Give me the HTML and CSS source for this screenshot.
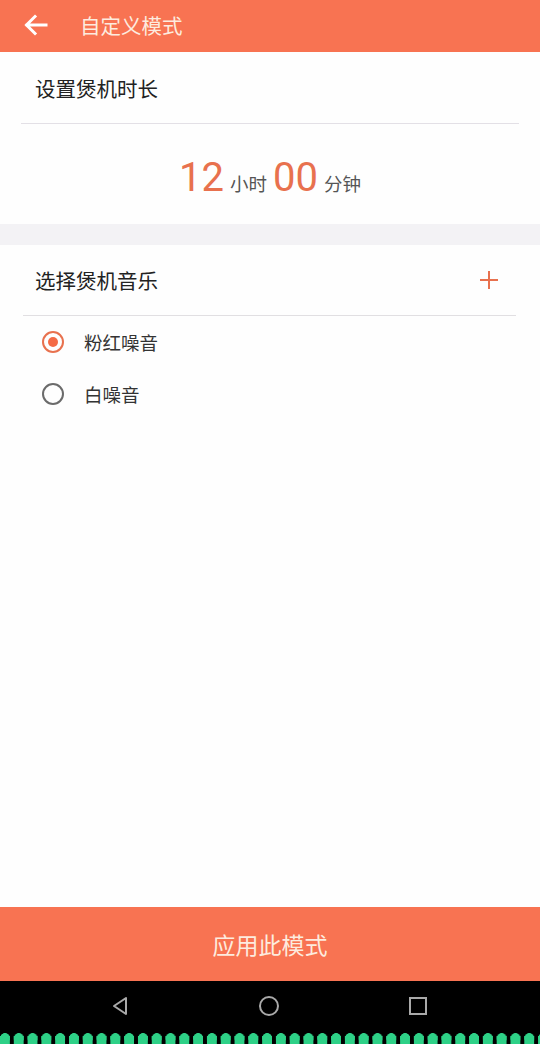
FILE: index.html
```html
<!DOCTYPE html>
<html lang="zh-CN">
<head>
  <meta charset="UTF-8" />
  <meta name="viewport" content="width=device-width, initial-scale=1.0"/>
  <title>自定义模式</title>
  <link rel="stylesheet" href="styles.css">
</head>
<body>
  <div class="page">
    <div class="topbar">
      <svg class="back" width="24" height="22" viewBox="0 0 24 22">
        <path d="M22 11H3M11 2.5L2.5 11 11 19.5" fill="none" stroke="#fff" stroke-width="3" stroke-linecap="square"/>
      </svg>
      <span class="topbar-title">自定义模式</span>
    </div>

    <div class="card">
      <div class="card-head">设置煲机时长</div>
      <div class="divider"></div>
      <div class="time">
        <span class="num">12</span><span class="unit">小时</span><span class="num">00</span><span class="unit last">分钟</span>
      </div>
    </div>

    <div class="gap"></div>

    <div class="music">
      <div class="card-head music-head">
        <span>选择煲机音乐</span>
        <svg class="plus" width="20" height="20" viewBox="0 0 20 20">
          <path d="M10 1v18M1 10h18" stroke="#e8714e" stroke-width="2"/>
        </svg>
      </div>
      <div class="divider divider-music"></div>
      <div class="option">
        <span class="radio checked"></span>
        <span>粉红噪音</span>
      </div>
      <div class="option">
        <span class="radio"></span>
        <span>白噪音</span>
      </div>
    </div>

    <div class="apply">应用此模式</div>

    <div class="navbar">
      <div class="nav-icons">
        <svg width="20" height="22" viewBox="0 0 20 22">
          <path d="M16 3L4 11l12 8z" fill="none" stroke="#a9a9a9" stroke-width="2" stroke-linejoin="round"/>
        </svg>
        <svg width="22" height="22" viewBox="0 0 22 22">
          <circle cx="11" cy="11" r="9" fill="none" stroke="#a9a9a9" stroke-width="2"/>
        </svg>
        <svg width="22" height="22" viewBox="0 0 22 22">
          <rect x="3" y="3" width="16" height="16" fill="none" stroke="#a9a9a9" stroke-width="2"/>
        </svg>
      </div>
      <div class="dots"></div>
    </div>
  </div>
</body>
</html>
```

FILE: styles.css
```css
body {
  margin: 0;
  font-family: "Noto Sans CJK SC", "Noto Sans", sans-serif;
  background-color: #fff;
}
.page {
  width: 540px;
  height: 1044px;
  display: flex;
  flex-direction: column;
  overflow: hidden;
}
.topbar {
  height: 52px;
  box-sizing: border-box;
  padding: 0 0 3px 24px;
  background-color: #f87352;
  display: flex;
  align-items: center;
}
.back {
  margin-right: 32px;
}
.topbar-title {
  color: #fdebdf;
  font-size: 20.5px;
}
.card {
  background-color: #fefefe;
}
.card-head {
  height: 71px;
  display: flex;
  align-items: center;
  padding-left: 35px;
  font-size: 20.5px;
  color: #222;
}
.divider {
  height: 1px;
  background-color: #e3e0e6;
  margin: 0 21px;
}
.time {
  height: 100px;
  display: flex;
  justify-content: center;
  align-items: baseline;
  padding-top: 8px;
  box-sizing: border-box;
  line-height: 92px;
}
.num {
  font-family: Roboto, "Noto Sans", sans-serif;
  font-size: 40px;
  color: #e8714e;
}
.unit {
  font-size: 18.5px;
  color: #555;
  margin: 0 6px;
}
.unit.last {
  margin-right: 0;
}
.gap {
  height: 21px;
  background-color: #f3f2f5;
}
.music {
  flex: 1;
  background-color: #fefefe;
}
.music-head {
  height: 70px;
  justify-content: space-between;
  padding-right: 41px;
}
.divider-music {
  margin: 0 24px 0 23px;
  background-color: #e1dfe2;
}
.option {
  height: 52px;
  display: flex;
  align-items: center;
  padding-left: 42px;
  font-size: 18.5px;
  color: #333;
}
.radio {
  width: 22px;
  height: 22px;
  border: 2px solid #6b6b6b;
  border-radius: 50%;
  box-sizing: border-box;
  margin-right: 20px;
  position: relative;
}
.radio.checked {
  border-color: #e8714e;
}
.radio.checked::after {
  content: "";
  position: absolute;
  left: 4px;
  top: 4px;
  width: 10px;
  height: 10px;
  border-radius: 50%;
  background-color: #f46a45;
}
.apply {
  height: 74px;
  background-color: #f87352;
  color: #fdebdf;
  font-size: 23px;
  display: flex;
  align-items: center;
  justify-content: center;
}
.navbar {
  height: 63px;
  background-color: #000;
}
.nav-icons {
  height: 50px;
  display: flex;
  align-items: center;
  justify-content: space-between;
  padding: 0 111px 0 110px;
}
.dots {
  height: 13px;
  background-image:
    radial-gradient(circle at 5px 5px, #2ed187 4.6px, transparent 5.2px),
    linear-gradient(to right, #2ed187 10px, transparent 10px);
  background-size: 13.8px 10px, 13.8px 8px;
  background-position: 0 2px, 0 5px;
  background-repeat: repeat-x, repeat-x;
}
```
